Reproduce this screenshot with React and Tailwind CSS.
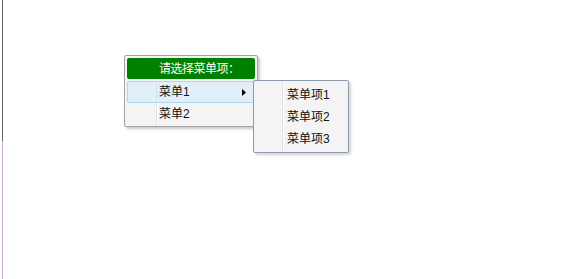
export default function App() {
  const font = { fontFamily: '"Liberation Sans", "Noto Sans CJK SC", sans-serif' };
  return (
    <div className="relative w-[569px] h-[279px] bg-white overflow-hidden" style={font}>
      <div className="absolute left-[2px] top-0 flex flex-col w-[1px] h-[279px]">
        <div className="h-[141px] bg-[#6a5f70]" />
        <div className="flex-1 bg-[#c4b0c8]" />
      </div>

      {/* main menu */}
      <div className="absolute left-[124px] top-[55px] w-[134px] h-[72px] border border-[#a3a3a3] rounded-[2px] bg-[#f4f4f4] shadow-[2px_2px_3px_rgba(0,0,0,0.22)] px-[2px] pt-[2px] text-[12px] text-[#111]">
        <div className="h-[21px] bg-[#008000] rounded-[2px] text-white flex items-center pl-[32px] tracking-[-0.5px]">
          请选择菜单项：
        </div>
        <div className="mt-[2px] relative">
          <div className="h-[22px] flex items-stretch bg-[#e2eff9] border border-[#a9d9f2] rounded-[2px]">
            <div className="w-[28px]" />
            <div className="w-[1px] bg-[#d8e3ea]" />
            <div className="flex-1 flex items-center pl-[2px]">菜单1</div>
            <div className="flex items-center pr-[8px]">
              <svg width="4" height="7" viewBox="0 0 4 7"><path d="M0 0 L4 3.5 L0 7 Z" fill="#000" /></svg>
            </div>
          </div>
          <div className="h-[22px] flex items-stretch">
            <div className="w-[29px]" />
            <div className="w-[1px] bg-[#e2e2e2] border-r border-white box-content" />
            <div className="flex-1 flex items-center pl-[1px]">菜单2</div>
          </div>
        </div>
      </div>

      {/* submenu */}
      <div className="absolute left-[253px] top-[80px] w-[96px] h-[73px] border border-[#8e9bad] rounded-[2px] bg-[#f4f4f4] shadow-[2px_2px_3px_rgba(0,0,0,0.18)] px-[2px] pt-[3px] text-[12px] text-[#111]">
        <div className="flex flex-col relative">
          <div className="absolute left-[26px] top-[-3px] h-[71px] w-[1px] bg-[#e2e2e2]" />
          <div className="absolute left-[27px] top-[-3px] h-[71px] w-[1px] bg-white" />
          {['菜单项1', '菜单项2', '菜单项3'].map((t) => (
            <div key={t} className="h-[22px] flex items-center pl-[31px]">{t}</div>
          ))}
        </div>
      </div>
    </div>
  );
}
